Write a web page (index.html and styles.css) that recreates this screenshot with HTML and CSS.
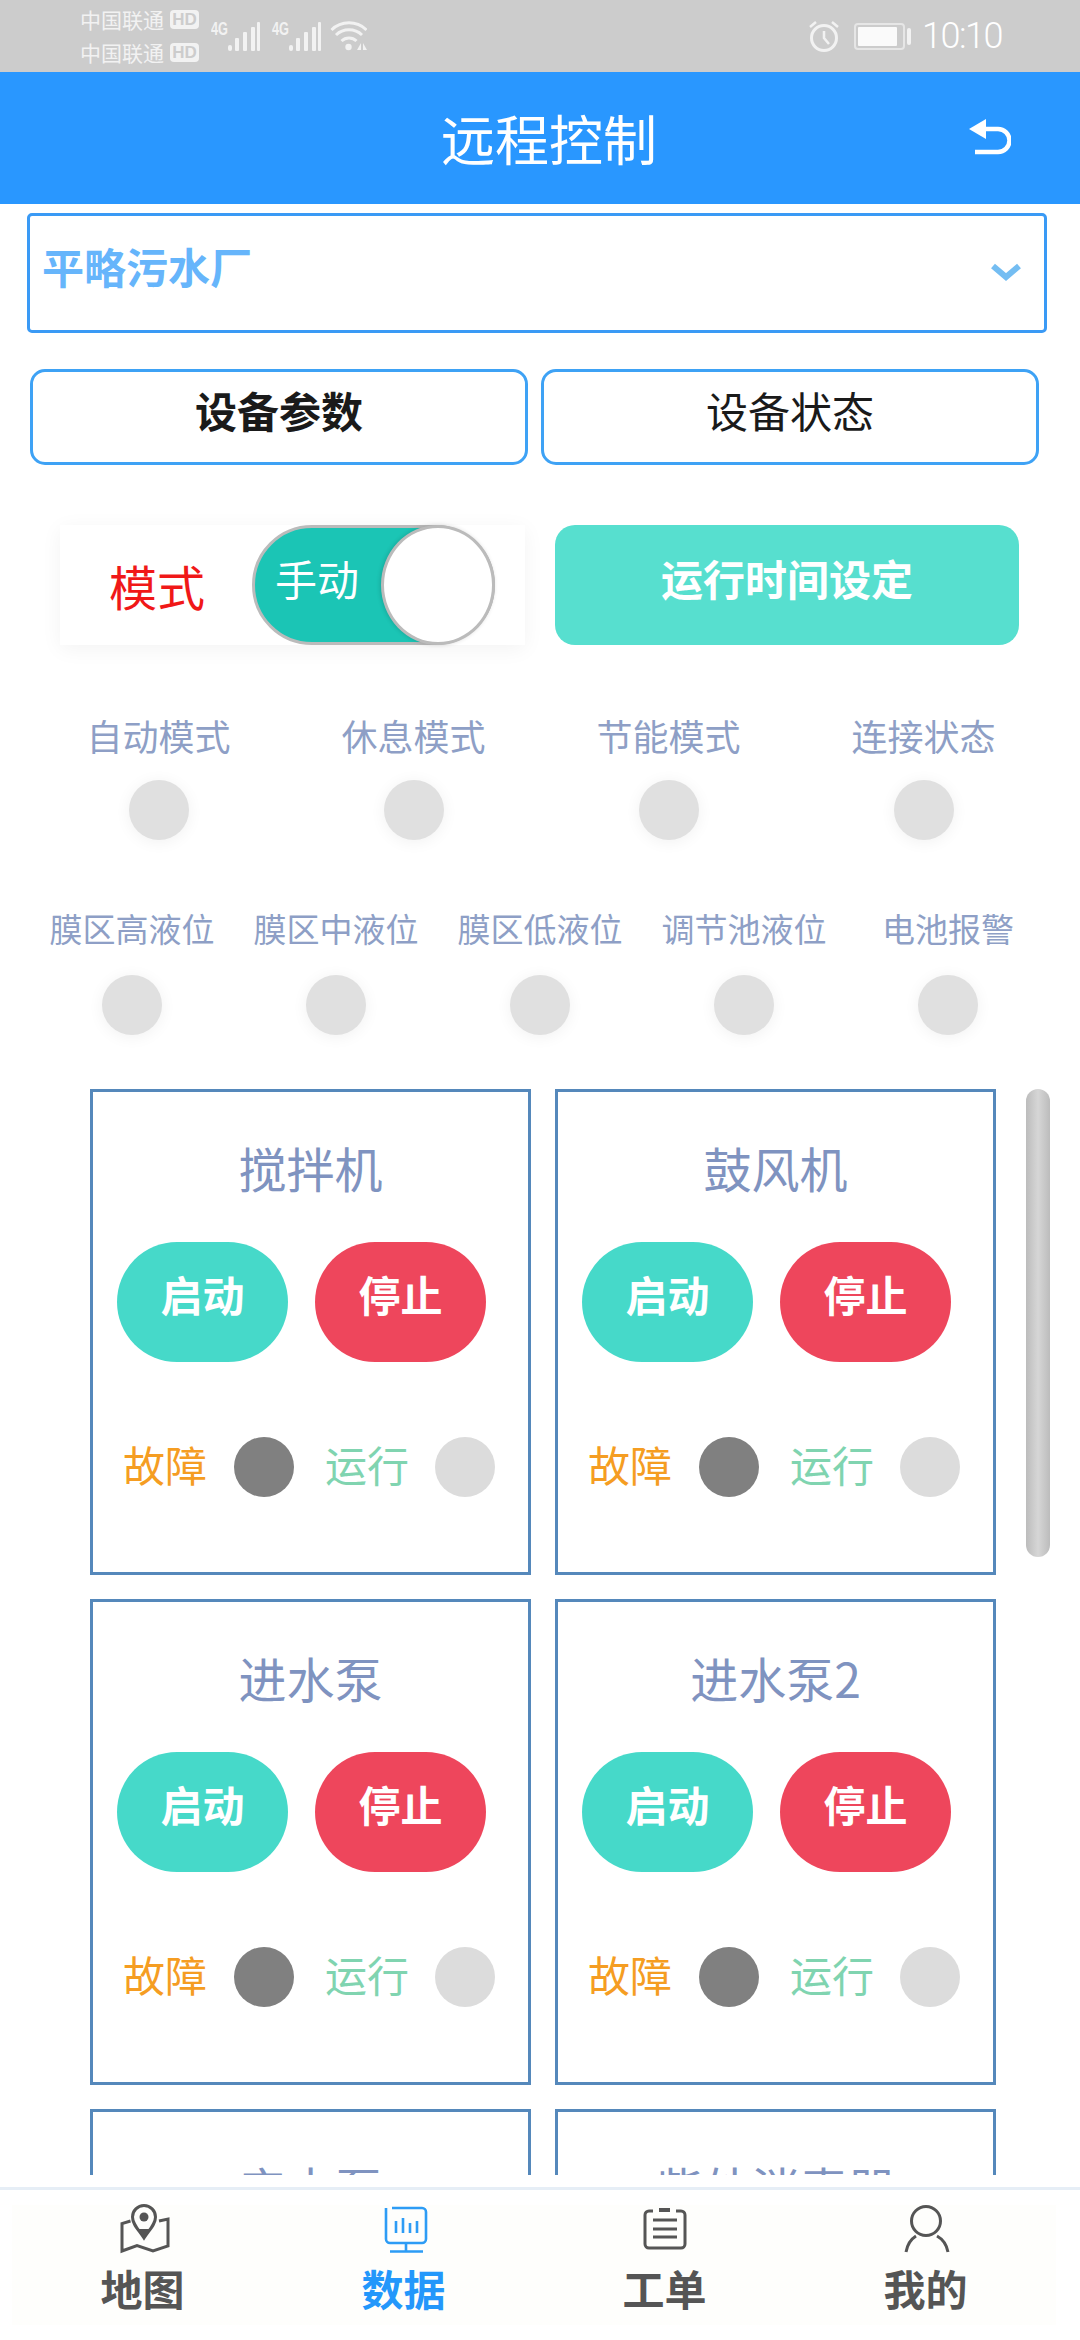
FILE: index.html
```html
<!DOCTYPE html>
<html lang="zh-CN">
<head>
  <meta charset="UTF-8" />
  <meta name="viewport" content="width=device-width, initial-scale=1.0" />
  <title>远程控制</title>
  <link rel="stylesheet" href="styles.css">
</head>
<body>
  <!-- Status bar -->
  <div class="status-bar">
    <div class="carriers">
      <div class="carrier">中国联通<span class="hd">HD</span></div>
      <div class="carrier">中国联通<span class="hd">HD</span></div>
    </div>
    <svg class="signals" width="156" height="36" viewBox="0 0 156 36">
      <text class="net" x="0" y="17" textLength="17" lengthAdjust="spacingAndGlyphs">4G</text>
      <g fill="#f2f2f2">
        <rect x="17" y="27" width="4" height="6" rx="2"/>
        <rect x="24" y="20" width="4" height="13" rx="1"/>
        <rect x="32" y="14" width="4" height="19" rx="1"/>
        <rect x="40" y="9" width="4" height="24" rx="1"/>
        <rect x="46" y="4" width="3" height="29" rx="1"/>
      </g>
      <text class="net" x="61" y="17" textLength="17" lengthAdjust="spacingAndGlyphs">4G</text>
      <g fill="#f2f2f2">
        <rect x="78" y="27" width="4" height="6" rx="2"/>
        <rect x="85" y="20" width="4" height="13" rx="1"/>
        <rect x="93" y="14" width="4" height="19" rx="1"/>
        <rect x="101" y="9" width="4" height="24" rx="1"/>
        <rect x="107" y="4" width="3" height="29" rx="1"/>
      </g>
      <g fill="none" stroke="#f2f2f2" stroke-width="3">
        <path d="M120.5 12 A25 25 0 0 1 155.5 12"/>
        <path d="M125 17 A19 19 0 0 1 151 17"/>
        <path d="M130.5 23 A11 11 0 0 1 145.5 23"/>
      </g>
      <circle cx="137.5" cy="29" r="3.2" fill="#f2f2f2"/>
      <path d="M150 25 V32 H146 Z M152 25 L156 32 H152 Z" fill="#f2f2f2"/>
    </svg>
    <div class="status-right">
      <svg width="34" height="34" viewBox="0 0 34 34">
        <g fill="none" stroke="#f2f2f2" stroke-width="3">
          <circle cx="17" cy="19" r="12.5"/>
          <path d="M17 12 V19 L22 25" stroke-width="2.5"/>
          <path d="M3 8 L9 3 M31 8 L25 3" stroke-width="2.5"/>
        </g>
      </svg>
      <div class="battery"><div class="battery-fill"></div></div>
      <div class="battery-cap"></div>
      <div class="clock">10:10</div>
    </div>
  </div>

  <!-- Header -->
  <div class="header">
    <h1>远程控制</h1>
    <svg class="back" width="42" height="36" viewBox="0 0 42 36">
      <path d="M0 10 L17 0 V20 Z" fill="#fff"/>
      <path d="M14 10 H29 A11.5 11.5 0 0 1 29 33 H6" fill="none" stroke="#fff" stroke-width="4.5"/>
    </svg>
  </div>

  <!-- Plant select -->
  <div class="plant-select">
    <span>平略污水厂</span>
    <svg width="32" height="20" viewBox="0 0 32 20">
      <path d="M3 4 L16 15 L29 4" fill="none" stroke="#74bdf2" stroke-width="6"/>
    </svg>
  </div>

  <!-- Tabs -->
  <div class="tabs">
    <div class="tab active">设备参数</div>
    <div class="tab">设备状态</div>
  </div>

  <!-- Mode + schedule -->
  <div class="controls">
    <div class="mode-panel">
      <span class="mode-label">模式</span>
      <div class="toggle">
        <span>手动</span>
        <div class="knob"></div>
      </div>
    </div>
    <div class="schedule-button">运行时间设定</div>
  </div>

  <!-- Indicators -->
  <div class="indicators four">
    <div class="indicator"><span>自动模式</span><i></i></div>
    <div class="indicator"><span>休息模式</span><i></i></div>
    <div class="indicator"><span>节能模式</span><i></i></div>
    <div class="indicator"><span>连接状态</span><i></i></div>
  </div>
  <div class="indicators five">
    <div class="indicator"><span>膜区高液位</span><i></i></div>
    <div class="indicator"><span>膜区中液位</span><i></i></div>
    <div class="indicator"><span>膜区低液位</span><i></i></div>
    <div class="indicator"><span>调节池液位</span><i></i></div>
    <div class="indicator"><span>电池报警</span><i></i></div>
  </div>

  <!-- Device cards -->
  <div class="devices">
    <div class="device-grid">
      <div class="card">
        <div class="card-title">搅拌机</div>
        <div class="pills"><div class="pill start">启动</div><div class="pill stop">停止</div></div>
        <div class="card-status"><span class="fault">故障</span><i class="lamp dark"></i><span class="run">运行</span><i class="lamp"></i></div>
      </div>
      <div class="card">
        <div class="card-title">鼓风机</div>
        <div class="pills"><div class="pill start">启动</div><div class="pill stop">停止</div></div>
        <div class="card-status"><span class="fault">故障</span><i class="lamp dark"></i><span class="run">运行</span><i class="lamp"></i></div>
      </div>
      <div class="card">
        <div class="card-title">进水泵</div>
        <div class="pills"><div class="pill start">启动</div><div class="pill stop">停止</div></div>
        <div class="card-status"><span class="fault">故障</span><i class="lamp dark"></i><span class="run">运行</span><i class="lamp"></i></div>
      </div>
      <div class="card">
        <div class="card-title">进水泵2</div>
        <div class="pills"><div class="pill start">启动</div><div class="pill stop">停止</div></div>
        <div class="card-status"><span class="fault">故障</span><i class="lamp dark"></i><span class="run">运行</span><i class="lamp"></i></div>
      </div>
      <div class="card">
        <div class="card-title">产水泵</div>
      </div>
      <div class="card">
        <div class="card-title">紫外消毒器</div>
      </div>
    </div>
    <div class="scrollbar"></div>
  </div>

  <!-- Bottom navigation -->
  <div class="tabbar">
    <div class="nav-item">
      <svg width="48" height="48" viewBox="0 0 48 48">
        <path d="M11.5 16 L3 18.5 V46 L18 40.5 L34 46 L49 41 V14 L40 16" fill="none" stroke="#555" stroke-width="3"/>
        <path d="M25 33 C19 24 13.5 19 13.5 12 A11.5 11.5 0 0 1 36.5 12 C36.5 19 31 24 25 33 Z" fill="#fefefc" stroke="#555" stroke-width="3"/>
        <path d="M25 33 L18 24 H32 Z" fill="#555"/>
        <circle cx="25" cy="12" r="4.5" fill="#555"/>
      </svg>
      <span>地图</span>
    </div>
    <div class="nav-item current">
      <svg width="48" height="48" viewBox="0 0 48 48" fill="none" stroke="#2d9cf5" stroke-width="2.6">
        <path d="M12 3 H42 A4 4 0 0 1 46 7 V34 A4 4 0 0 1 42 38 H10 A4 4 0 0 1 6 34 V3"/>
        <path d="M26 38 V46 M10 46.5 H43"/>
        <path d="M16 16 V28 M23 13 V28 M30 18 V28 M37 16 V28"/>
      </svg>
      <span>数据</span>
    </div>
    <div class="nav-item">
      <svg width="48" height="48" viewBox="0 0 48 48" fill="none" stroke="#555" stroke-width="3">
        <path d="M12 6 H8 A4 4 0 0 0 4 10 V39 A4 4 0 0 0 8 43 H40 A4 4 0 0 0 44 39 V10 A4 4 0 0 0 40 6 H35"/>
        <path d="M18 5 H29" stroke-width="4"/>
        <path d="M12 15 H36 M12 24 H36 M12 32 H36"/>
      </svg>
      <span>工单</span>
    </div>
    <div class="nav-item">
      <svg width="48" height="48" viewBox="0 0 48 48" fill="none" stroke="#555" stroke-width="3">
        <circle cx="24" cy="16" r="14.5"/>
        <path d="M4 47 Q6 36 14 31 M46 47 Q44 36 35 31"/>
      </svg>
      <span>我的</span>
    </div>
  </div>
</body>
</html>
```

FILE: styles.css
```css
* { box-sizing: border-box; }
html, body { margin: 0; padding: 0; }
body {
  width: 1080px;
  height: 2340px;
  overflow: hidden;
  background: #fff;
  font-family: "Noto Sans CJK SC", "Noto Sans", sans-serif;
}
i { display: block; }

/* Status bar */
.status-bar {
  height: 72px;
  background: #ccc;
  display: flex;
  align-items: center;
  padding-left: 80px;
  color: #f2f2f2;
}
.carriers { width: 131px; }
.carrier {
  display: flex;
  align-items: center;
  height: 33px;
  font-size: 21px;
  line-height: 33px;
}
.hd {
  margin-left: 6px;
  width: 29px;
  height: 19px;
  border-radius: 4px;
  background: #f2f2f2;
  color: #ccc;
  font: bold 17px/19px "Liberation Sans", sans-serif;
  text-align: center;
}
.net { font: bold 19px "Liberation Sans", sans-serif; fill: #f2f2f2; }
.status-right {
  margin-left: auto;
  display: flex;
  align-items: center;
  padding-right: 78px;
}
.battery {
  margin-left: 13px;
  width: 51px;
  height: 27px;
  border: 2px solid #e6e6e6;
  border-radius: 4px;
  padding: 2px;
}
.battery-fill { width: 39px; height: 19px; background: #fafafa; border-radius: 1px; }
.battery-cap { margin-left: 2px; width: 4px; height: 17px; background: #f2f2f2; border-radius: 2px; }
.clock { margin-left: 11px; font: 300 36px/72px Roboto, sans-serif; letter-spacing: -1.5px; color: #fff; }

/* Header */
.header {
  height: 132px;
  background: #2997ff;
  display: flex;
  align-items: center;
  padding-left: 440px;
}
.header h1 {
  margin: 0 0 0 1px;
  font-size: 54px;
  font-weight: 400;
  line-height: 70px;
  color: #fff;
}
.back { margin-left: 312px; margin-top: -2px; }

/* Plant select */
.plant-select {
  margin: 9px 33px 0 27px;
  height: 120px;
  border: 3px solid #3a9af5;
  border-radius: 5px;
  display: flex;
  align-items: flex-start;
  justify-content: space-between;
  padding: 23px 22px 0 12px;
}
.plant-select span {
  font-size: 42px;
  font-weight: 700;
  line-height: 54px;
  color: #66b5fb;
}
.plant-select svg { margin-top: 23px; }

/* Tabs */
.tabs {
  display: flex;
  gap: 13px;
  margin: 36px 0 0 30px;
}
.tab {
  width: 498px;
  height: 96px;
  border: 3px solid #3ea2f5;
  border-radius: 15px;
  font-size: 42px;
  line-height: 76px;
  text-align: center;
  color: #1a1a1a;
}
.tab.active { font-weight: 700; }

/* Mode + schedule */
.controls {
  display: flex;
  gap: 30px;
  margin: 60px 0 0 60px;
}
.mode-panel {
  width: 465px;
  height: 120px;
  background: #fff;
  box-shadow: 0 4px 20px rgba(0, 0, 0, 0.05);
  display: flex;
  align-items: center;
  padding-left: 49px;
}
.mode-label { font-size: 48px; line-height: 60px; color: #f01818; width: 143px; }
.toggle {
  width: 243px;
  height: 120px;
  border: 3px solid #bbb;
  border-radius: 60px;
  background: #1bc5b5;
  display: flex;
  align-items: center;
  justify-content: space-between;
  padding-left: 20px;
}
.toggle span { font-size: 42px; line-height: 54px; color: #fff; padding-bottom: 14px; }
.knob {
  width: 114px;
  height: 120px;
  margin: -3px;
  border: 3px solid #bbb;
  border-radius: 50%;
  background: #fff;
  box-shadow: -1px 0 4px rgba(0, 0, 0, 0.15);
}
.schedule-button {
  width: 464px;
  height: 120px;
  border-radius: 20px;
  background: #57dfcf;
  color: #fff;
  font-size: 42px;
  font-weight: 700;
  line-height: 106px;
  text-align: center;
}

/* Indicators */
.indicators { display: grid; }
.indicators.four {
  grid-template-columns: repeat(4, 255px);
  margin: 65px 0 0 31px;
}
.indicators.five {
  grid-template-columns: repeat(5, 204px);
  margin: 63px 0 0 30px;
}
.indicator {
  display: flex;
  flex-direction: column;
  align-items: center;
  gap: 20px;
  color: #8e9fc6;
  font-size: 36px;
  line-height: 50px;
}
.five .indicator { font-size: 33px; gap: 22px; }
.indicator i {
  width: 60px;
  height: 60px;
  border-radius: 50%;
  background: #e0e0e0;
  box-shadow: 0 2px 16px rgba(0, 0, 0, 0.06);
}

/* Device cards */
.devices {
  display: flex;
  align-items: flex-start;
  height: 1086px;
  margin-top: 54px;
  padding-left: 90px;
  overflow: hidden;
}
.device-grid {
  display: grid;
  grid-template-columns: repeat(2, 441px);
  grid-auto-rows: 486px;
  gap: 24px;
}
.card {
  border: 3px solid #5588bb;
  padding: 45px 0 0 24px;
}
.card-title {
  margin-left: -24px;
  font-size: 48px;
  line-height: 60px;
  text-align: center;
  color: #7f93c0;
}
.pills {
  display: flex;
  gap: 27px;
  margin-top: 45px;
}
.pill {
  width: 171px;
  height: 120px;
  border-radius: 60px;
  color: #fff;
  font-size: 42px;
  font-weight: 700;
  line-height: 104px;
  text-align: center;
}
.pill.start { background: #46d9c9; }
.pill.stop { background: #ee465c; }
.card-status {
  display: flex;
  align-items: center;
  margin: 75px 0 0 6px;
  font-size: 42px;
}
.card-status span { line-height: 46px; padding-bottom: 6px; }
.fault { color: #f59d22; width: 111px; }
.run { color: #80d4b0; width: 110px; margin-left: 31px; }
.lamp { width: 60px; height: 60px; border-radius: 50%; background: #dcdcdc; }
.lamp.dark { background: #808080; }
.scrollbar {
  margin-left: 30px;
  width: 24px;
  height: 468px;
  border-radius: 12px;
  background: linear-gradient(90deg, #bcbcbc, #d6d6d6 50%, #bcbcbc);
}

/* Bottom navigation */
.tabbar {
  margin-top: 12px;
  height: 153px;
  border-top: 3px solid #e6eef6;
  padding: 15px 24px 0 12px;
  display: grid;
  grid-template-columns: repeat(4, 261px);
  align-items: start;
}
.nav-item {
  height: 120px;
  background: #fefefc;
  display: flex;
  flex-direction: column;
  align-items: center;
  color: #555;
  font-size: 42px;
  font-weight: 700;
  line-height: 50px;
}
.nav-item svg { overflow: visible; flex: none; }
.nav-item span { margin-top: 10px; }
.nav-item.current { color: #2397fb; }
```
